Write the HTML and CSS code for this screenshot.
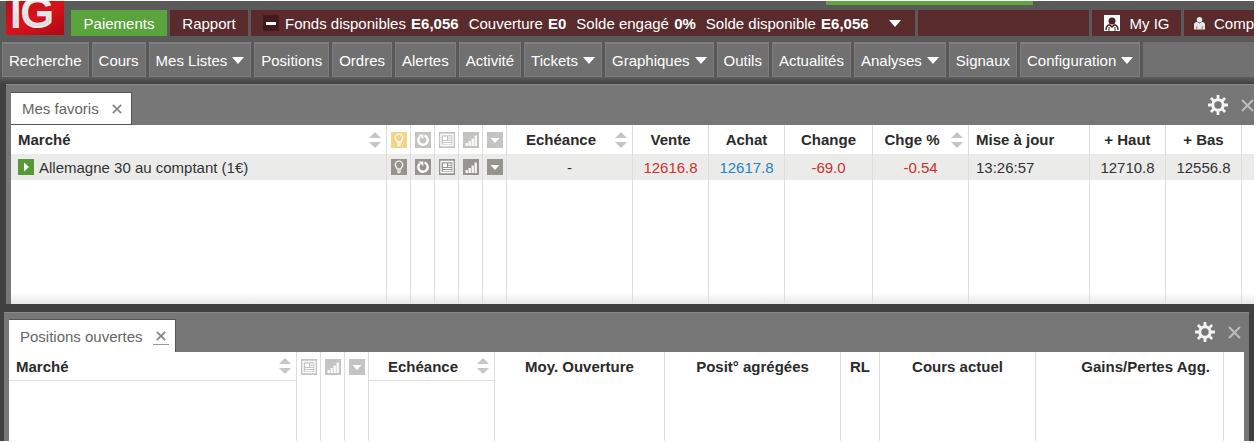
FILE: index.html
```
<!DOCTYPE html>
<html lang="fr">
<head>
    <meta charset="UTF-8">
    <meta name="viewport" content="width=device-width, initial-scale=1.0">
    <title>IG - Plateforme</title>
    <link rel="stylesheet" href="styles.css">
</head>
<body>

    <!-- Icones -->
    <svg class="symbols" aria-hidden="true">
        <symbol id="i-bulb" viewBox="0 0 16 16">
            <path d="M6.300 10C6 8.500 4.300 8 4.300 5.800a3.700 3.700 0 0 1 7.400 0C11.700 8 10 8.500 9.700 10Z" fill="none" stroke="#fff" stroke-opacity=".85" stroke-width="1.400"/>
            <path d="M6 11.800h4M6.500 13.500h3" fill="none" stroke="#fff" stroke-opacity=".85" stroke-width="1.300"/>
        </symbol>
        <symbol id="i-cycle" viewBox="0 0 16 16">
            <path d="M9.500 3.600a4.700 4.700 0 1 1-4.700 1" fill="none" stroke="#fff" stroke-width="2.400"/>
            <path d="M3.500 2.500h4.800v4.800Z" fill="#fff"/>
        </symbol>
        <symbol id="i-news" viewBox="0 0 16 16">
            <path d="M2 2.500h12v11H2z" fill="none" stroke="#fff" stroke-width="1.300"/>
            <path d="M4 4.500h4v3.500H4z" fill="#fff"/>
            <path d="M9 5.200h3.500M9 7.300h3.500M4 9.500h8.500M4 11.600h8.500" stroke="#fff" stroke-width="1.200"/>
        </symbol>
        <symbol id="i-chart" viewBox="0 0 16 16">
            <path d="M2.500 11h2.400v3H2.500zM5.500 9h2.400v5H5.500zM8.500 6.500h2.400V14H8.500zM11.500 3.500h2.400V14h-2.400z" fill="#fff" fill-opacity=".9"/>
        </symbol>
        <symbol id="i-down" viewBox="0 0 16 16">
            <path d="M3.500 6h9L8 11z" fill="#fff"/>
        </symbol>
        <symbol id="i-sort" viewBox="0 0 12 18">
            <path d="M6 1l6 6H0zM6 17l6-6H0z" fill="#c6c6c6"/>
        </symbol>
        <symbol id="i-caret" viewBox="0 0 12 7">
            <path d="M0 0h12L6 7z" fill="#fff"/>
        </symbol>
        <symbol id="i-gear" viewBox="0 0 20 20">
            <circle cx="10" cy="10" r="5.200" fill="none" stroke="#f4f4f4" stroke-width="3"/>
            <path d="M10 0v4M10 16v4M0 10h4M16 10h4M2.900 2.900l3 3M14.100 14.100l3 3M2.900 17.100l3-3M14.100 5.900l3-3" stroke="#f4f4f4" stroke-width="2.800"/>
        </symbol>
        <symbol id="i-close" viewBox="0 0 12 12">
            <path d="M1 1l10 10M11 1L1 11" stroke="currentColor" stroke-width="2"/>
        </symbol>
    </svg>

    <header class="header">
        <a class="logo" href="#" aria-label="IG">
            <svg width="58" height="34" viewBox="0 0 58 34">
                <defs>
                    <linearGradient id="red" x1="0" y1="0" x2="1" y2="1">
                        <stop offset="0" stop-color="#b80f18"/>
                        <stop offset=".5" stop-color="#d9121b"/>
                        <stop offset="1" stop-color="#a90a12"/>
                    </linearGradient>
                    <linearGradient id="steel" x1="0" y1="0" x2="0" y2="1">
                        <stop offset="0" stop-color="#fff"/>
                        <stop offset="1" stop-color="#c9cdd0"/>
                    </linearGradient>
                </defs>
                <rect width="58" height="34" fill="url(#red)"/>
                <text class="logo-text" x="4 15" y="26">IG</text>
            </svg>
        </a>
        <div class="header-main">
            <div class="strip"></div>
            <div class="topbar">
                <a class="top-item pay" href="#">Paiements</a>
                <a class="top-item report" href="#">Rapport</a>
                <div class="top-item funds">
                    <button class="minus" aria-label="Réduire"></button>
                    <span>Fonds disponibles <b>E6,056</b></span>
                    <span>Couverture <b>E0</b></span>
                    <span>Solde engagé <b>0%</b></span>
                    <span>Solde disponible <b>E6,056</b></span>
                    <button class="more" aria-label="Plus"><svg width="12" height="7"><use href="#i-caret"/></svg></button>
                </div>
                <div class="top-item spacer"></div>
                <a class="top-item my" href="#">
                    <svg width="16" height="16" viewBox="0 0 16 16">
                        <path d="M0 0h16v16H0z" fill="#fff"/>
                        <circle cx="8" cy="6" r="3.500" fill="#4a2224"/>
                        <path d="M2 15c0-4 2-5 4-5l2 2 2-2c2 0 4 1 4 5" fill="none" stroke="#4a2224" stroke-width="1.500"/>
                        <path d="M5 12v4M11 12v4" stroke="#4a2224"/>
                    </svg>
                    My IG
                </a>
                <a class="top-item account" href="#">
                    <svg width="12" height="14" viewBox="0 0 12 14">
                        <circle cx="6" cy="3.500" r="3" fill="#e8e8e8"/>
                        <path d="M0 14V8.500c0-2 2-2.500 3.500-2.500L6 7.500 8.500 6C10 6 12 6.500 12 8.500V14z" fill="#e8e8e8"/>
                        <path d="M3 10.500V14M9 10.500V14" stroke="#8a6a6b"/>
                    </svg>
                    Comp
                </a>
            </div>
        </div>
    </header>

    <nav class="nav">
        <button>Recherche</button>
        <button>Cours</button>
        <button>Mes Listes <svg width="12" height="7"><use href="#i-caret"/></svg></button>
        <button>Positions</button>
        <button>Ordres</button>
        <button>Alertes</button>
        <button>Activité</button>
        <button>Tickets <svg width="12" height="7"><use href="#i-caret"/></svg></button>
        <button>Graphiques <svg width="12" height="7"><use href="#i-caret"/></svg></button>
        <button>Outils</button>
        <button>Actualités</button>
        <button>Analyses <svg width="12" height="7"><use href="#i-caret"/></svg></button>
        <button>Signaux</button>
        <button>Configuration <svg width="12" height="7"><use href="#i-caret"/></svg></button>
        <div class="nav-rest"></div>
    </nav>

    <main class="desk">
        <!-- Mes favoris -->
        <section class="panel favorites">
            <div class="panel-head">
                <div class="tab">
                    <span>Mes favoris</span>
                    <button class="tab-close" aria-label="Fermer l'onglet"><svg width="10" height="10"><use href="#i-close"/></svg></button>
                </div>
                <div class="tools">
                    <button aria-label="Réglages"><svg width="20" height="20"><use href="#i-gear"/></svg></button>
                    <button class="close" aria-label="Fermer"><svg width="13" height="13"><use href="#i-close"/></svg></button>
                </div>
            </div>
            <table>
                <colgroup>
                    <col>
                    <col class="w-icon"><col class="w-icon"><col class="w-icon"><col class="w-icon"><col class="w-icon">
                    <col class="w-expiry">
                    <col class="w-price"><col class="w-price">
                    <col class="w-change"><col class="w-pct"><col class="w-time">
                    <col class="w-price"><col class="w-price">
                    <col class="w-end">
                </colgroup>
                <thead>
                    <tr>
                        <th class="market"><div class="sortable"><span>Marché</span><svg width="12" height="18"><use href="#i-sort"/></svg></div></th>
                        <th class="ico"><svg class="box yellow"><use href="#i-bulb"/></svg></th>
                        <th class="ico"><svg class="box light"><use href="#i-cycle"/></svg></th>
                        <th class="ico"><svg class="box light"><use href="#i-news"/></svg></th>
                        <th class="ico"><svg class="box light"><use href="#i-chart"/></svg></th>
                        <th class="ico"><svg class="box light"><use href="#i-down"/></svg></th>
                        <th><div class="sortable"><span>Echéance</span><svg width="12" height="18"><use href="#i-sort"/></svg></div></th>
                        <th>Vente</th>
                        <th>Achat</th>
                        <th>Change</th>
                        <th><div class="sortable"><span>Chge %</span><svg width="12" height="18"><use href="#i-sort"/></svg></div></th>
                        <th class="time">Mise à jour</th>
                        <th>+ Haut</th>
                        <th>+ Bas</th>
                        <th></th>
                    </tr>
                </thead>
                <tbody>
                    <tr class="row">
                        <td class="market">
                            <div class="name">
                                <button aria-label="Ouvrir"><svg width="16" height="16" viewBox="0 0 16 16"><path d="M6 3.500l5 4.500-5 4.500z" fill="#fff"/></svg></button>
                                <span>Allemagne 30 au comptant (1€)</span>
                            </div>
                        </td>
                        <td class="ico"><svg class="box"><use href="#i-bulb"/></svg></td>
                        <td class="ico"><svg class="box"><use href="#i-cycle"/></svg></td>
                        <td class="ico"><svg class="box"><use href="#i-news"/></svg></td>
                        <td class="ico"><svg class="box"><use href="#i-chart"/></svg></td>
                        <td class="ico"><svg class="box"><use href="#i-down"/></svg></td>
                        <td>-</td>
                        <td class="red">12616.8</td>
                        <td class="blue">12617.8</td>
                        <td class="red">-69.0</td>
                        <td class="red">-0.54</td>
                        <td class="time">13:26:57</td>
                        <td>12710.8</td>
                        <td>12556.8</td>
                        <td></td>
                    </tr>
                    <tr class="empty">
                        <td></td><td></td><td></td><td></td><td></td><td></td><td></td><td></td>
                        <td></td><td></td><td></td><td></td><td></td><td></td><td></td>
                    </tr>
                </tbody>
            </table>
        </section>

        <!-- Positions ouvertes -->
        <section class="panel positions">
            <div class="panel-head">
                <div class="tab">
                    <span>Positions ouvertes</span>
                    <button class="tab-close underlined" aria-label="Fermer l'onglet"><svg width="10" height="10"><use href="#i-close"/></svg></button>
                </div>
                <div class="tools">
                    <button aria-label="Réglages"><svg width="20" height="20"><use href="#i-gear"/></svg></button>
                    <button class="close" aria-label="Fermer"><svg width="13" height="13"><use href="#i-close"/></svg></button>
                </div>
            </div>
            <table>
                <colgroup>
                    <col>
                    <col class="w-icon"><col class="w-icon"><col class="w-icon">
                    <col class="w-expiry">
                    <col class="w-open"><col class="w-total"><col class="w-rl"><col class="w-course"><col class="w-gain">
                    <col class="w-last">
                </colgroup>
                <thead>
                    <tr>
                        <th class="market lined"><div class="sortable"><span>Marché</span><svg width="12" height="18"><use href="#i-sort"/></svg></div></th>
                        <th class="ico"><svg class="box light"><use href="#i-news"/></svg></th>
                        <th class="ico"><svg class="box light"><use href="#i-chart"/></svg></th>
                        <th class="ico"><svg class="box light"><use href="#i-down"/></svg></th>
                        <th class="lined"><div class="sortable"><span>Echéance</span><svg width="12" height="18"><use href="#i-sort"/></svg></div></th>
                        <th>Moy. Ouverture</th>
                        <th>Posit° agrégées</th>
                        <th>RL</th>
                        <th>Cours actuel</th>
                        <th class="gain">Gains/Pertes Agg.</th>
                        <th></th>
                    </tr>
                </thead>
                <tbody>
                    <tr class="empty">
                        <td></td><td></td><td></td><td></td><td></td><td></td>
                        <td></td><td></td><td></td><td></td><td></td>
                    </tr>
                </tbody>
            </table>
        </section>
    </main>

</body>
</html>
```

FILE: styles.css
```
* {
    box-sizing: border-box;
}

body {
    margin: 0;
    padding: 1px 2px 1px 0;
    background-color: #fff;
    font-family: "Liberation Sans", Arial, sans-serif;
    font-size: 15px;
    color: #333;
    overflow: hidden;
}

button {
    margin: 0;
    padding: 0;
    border: none;
    background: none;
    color: inherit;
    font: inherit;
    cursor: pointer;
}

a {
    color: inherit;
    text-decoration: none;
}

svg {
    display: block;
}

.symbols {
    display: none;
}

/* Barre du haut */
.header {
    display: flex;
    gap: 7px;
    padding-left: 6px;
    background-color: #5a5a5a;
    color: #fff;
    overflow: hidden;
}

.logo {
    flex: none;
}

.logo-text {
    font-size: 42px;
    fill: url(#steel);
    stroke: #e4e6e8;
    stroke-width: 2px;
}

.header-main {
    flex: 1;
    min-width: 0;
}

.strip {
    width: 207px;
    height: 4px;
    margin: 0 221px 5px auto;
    background-color: #5fa63f;
}

.topbar {
    display: flex;
    gap: 3px;
    height: 26px;
    margin-bottom: 5px;
}

.top-item {
    display: flex;
    flex: none;
    align-items: center;
    justify-content: center;
    background-color: #5a2b2d;
    white-space: nowrap;
}

.pay {
    width: 96px;
    background-color: #5aa33d;
}

.report {
    width: 78px;
}

.funds {
    justify-content: flex-start;
    gap: 10px;
    width: 664px;
    padding-left: 12px;
}

.funds b {
    margin-left: 1px;
}

.minus {
    width: 16px;
    height: 16px;
    margin-right: -4px;
    padding: 0 3px;
    background-color: #43191b;
}

.minus::before {
    content: "";
    display: block;
    height: 3px;
    background-color: #fff;
}

.more {
    margin-left: 10px;
}

.spacer {
    flex: 1;
}

.my {
    gap: 10px;
    width: 89px;
}

.account {
    justify-content: flex-start;
    gap: 9px;
    width: 70px;
    padding-left: 10px;
    overflow: hidden;
}

/* Menu */
.nav {
    display: flex;
    gap: 3px;
    padding: 1px 0 0 2px;
    background-color: #585858;
    color: #fff;
    overflow: hidden;
}

.nav button {
    display: flex;
    flex: none;
    align-items: center;
    gap: 5px;
    height: 35px;
    padding: 0 6px;
    border: 1px solid #7c7c7c;
    border-top: 2px solid #808080;
    background-color: #707070;
    white-space: nowrap;
}

.nav button:hover {
    background-color: #7c7c7c;
}

.nav-rest {
    flex: 1;
    background-color: #717171;
}

/* Fenetres */
.desk {
    display: flex;
    flex-direction: column;
    gap: 8px;
    padding-top: 7px;
    background-color: #464646;
    background-image: linear-gradient(#5c5c5c, #404040 7px);
}

.panel {
    border-top: 1px solid #8a8a8a;
    background-color: #777;
}

.favorites {
    padding-left: 5px;
    margin-left: 6px;
}

.positions {
    margin: 0 5px 0 4px;
    padding: 0 5px;
}

.panel-head {
    display: flex;
    align-items: flex-end;
    justify-content: space-between;
    height: 40px;
    overflow: hidden;
}

.tab {
    display: flex;
    align-items: center;
    gap: 10px;
    height: 33px;
    padding: 0 6px 0 11px;
    border: 1px solid #555;
    border-left: none;
    border-bottom: none;
    background-color: #fff;
    color: #666;
}

.favorites .tab {
    border-bottom: 1px solid #555;
}

.positions .panel-head {
    height: 39px;
}

.tab-close {
    display: flex;
    justify-content: center;
    width: 16px;
    padding: 3px 0;
    color: #858585;
}

.underlined {
    border-bottom: 1px solid #999;
}

.tools {
    display: flex;
    align-items: center;
    gap: 13px;
    height: 40px;
    padding-right: 3px;
}

.favorites .tools {
    padding-right: 0;
}

.close {
    color: #bbb;
}

/* Tableaux */
table {
    width: 100%;
    table-layout: fixed;
    border-collapse: separate;
    border-spacing: 0;
    background-color: #fff;
}

th,
td {
    height: 26px;
    padding: 0;
    border-right: 1px solid #dedede;
    text-align: center;
    white-space: nowrap;
}

th {
    height: 29px;
    color: #2b2b2b;
}

th:last-child,
td:last-child {
    border-right: none;
}

.w-icon { width: 24px; }
.w-expiry { width: 126px; }
.w-price { width: 76px; }
.w-change { width: 88px; }
.w-pct { width: 96px; }
.w-time { width: 121px; }
.w-end { width: 12px; }
.w-open { width: 170px; }
.w-total { width: 176px; }
.w-rl { width: 39px; }
.w-course { width: 156px; }
.w-gain { width: 188px; }
.w-last { width: 20px; }

.market {
    padding-left: 7px;
    text-align: left;
}

.time {
    padding-left: 7px;
    text-align: left;
}

.gain {
    padding-right: 13px;
    text-align: right;
}

.lined {
    border-bottom: 1px solid #dedede;
}

.sortable {
    display: flex;
    align-items: center;
    padding-right: 5px;
}

.sortable span {
    flex: 1;
}

.name {
    display: flex;
    align-items: center;
    gap: 5px;
}

.name button {
    background-color: #57993a;
}

.box {
    width: 16px;
    height: 16px;
    margin: 0 auto;
    background-color: #96948f;
}

.light {
    background-color: #c4c4c2;
}

.yellow {
    background-color: #f3d58a;
}

.row td {
    background-color: #ebebe9;
}

.red {
    color: #c9322d;
}

.blue {
    color: #2484c0;
}

.favorites .empty td {
    height: 124px;
    background-image: linear-gradient(transparent 112px, #e9e9e9);
}

.positions .empty td {
    height: 60px;
}
```
